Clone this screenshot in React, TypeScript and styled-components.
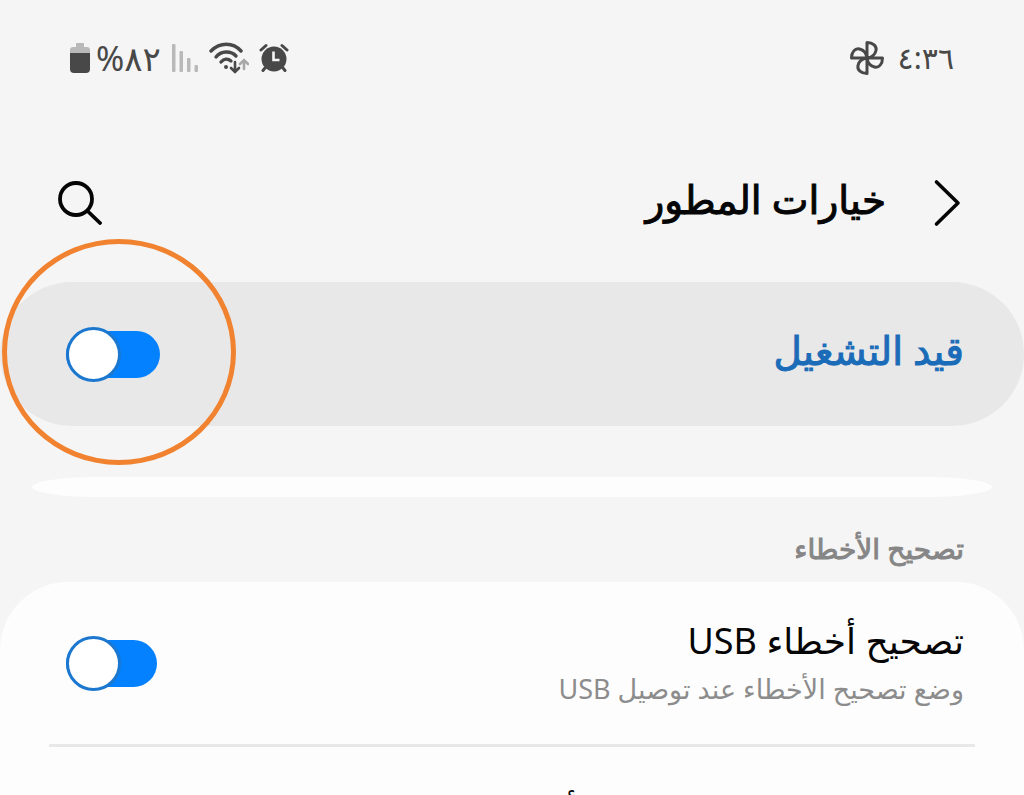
import React from 'react';
import styled, { createGlobalStyle } from 'styled-components';

const GlobalStyle = createGlobalStyle`
  *, *::before { box-sizing: border-box; }
  body {
    margin: 0;
    background: #f5f5f5;
    color: #050505;
    font-family: "Noto Sans", "DejaVu Sans", sans-serif;
  }
`;

const Screen = styled.div`
  display: flex;
  flex-direction: column;
  height: 100vh;
  overflow: hidden;
`;

const StatusBar = styled.div`
  display: flex;
  justify-content: space-between;
  align-items: center;
  flex: none;
  height: 116px;
  padding: 0 70px;
  color: #484848;
`;

const StatusGroup = styled.div<{ $gap: number }>`
  display: flex;
  align-items: center;
  gap: ${(p) => p.$gap}px;
`;

const Battery = styled.div`
  display: flex;
  align-items: center;
  gap: 6px;
`;

const StatusText = styled.span<{ $large?: boolean }>`
  font-size: ${(p) => (p.$large ? 34 : 30)}px;
  line-height: 36px;
`;

const Header = styled.header`
  display: flex;
  align-items: center;
  flex: none;
  height: 166px;
  padding: 8px 63px 0 58px;
`;

const IconButton = styled.button`
  display: flex;
  border: 0;
  padding: 0;
  background: none;
  color: #050505;
  cursor: pointer;
`;

const Title = styled.h1`
  flex: 1;
  margin: 0 47px 0 0;
  padding-bottom: 8px;
  font-size: 39px;
  line-height: 56px;
  font-weight: 400;
  -webkit-text-stroke: 1px currentColor;
`;

const MainSwitch = styled.label`
  position: relative;
  display: flex;
  align-items: center;
  justify-content: space-between;
  flex: none;
  height: 144px;
  padding: 0 60px 0 66px;
  border-radius: 72px;
  background: #e8e8e8;
`;

const MainLabel = styled.span`
  padding-bottom: 8px;
  color: #1b6cb8;
  font-size: 39px;
  line-height: 56px;
  -webkit-text-stroke: 1px currentColor;
`;

const Highlight = styled.span`
  position: absolute;
  left: 2px;
  top: -43px;
  width: 234px;
  height: 226px;
  border: 5px solid #f08230;
  border-radius: 50%;
  pointer-events: none;
`;

const Toggle = styled.input<{ $wide?: boolean }>`
  appearance: none;
  display: flex;
  align-items: center;
  justify-content: flex-end;
  flex: none;
  width: ${(p) => (p.$wide ? 94 : 91)}px;
  height: 47px;
  margin: 0;
  background: #0381fe;
  border-radius: 24px;
  cursor: pointer;

  &::before {
    content: "";
    flex: none;
    width: 55px;
    height: 55px;
    border: 3px solid #1c78cf;
    border-radius: 50%;
    background: #fff;
  }
`;

const CardEnd = styled.div`
  flex: none;
  height: 20px;
  margin: 51px 32px 0;
  border-radius: 64px / 10px;
  background: #fdfdfd;
`;

const SectionTitle = styled.h2`
  flex: none;
  margin: 0;
  padding: 31px 60px 14px;
  color: #868686;
  font-size: 28px;
  line-height: 40px;
  font-weight: 400;
  -webkit-text-stroke: 1px currentColor;
`;

const Card = styled.section`
  flex: 1 0 auto;
  border-radius: 68px 68px 0 0;
  background: #fdfdfd;
`;

const Row = styled.label`
  display: flex;
  align-items: center;
  justify-content: space-between;
  height: 162px;
  padding: 0 60px 0 66px;
`;

const RowText = styled.span`
  display: flex;
  flex-direction: column;
  gap: 2px;
  padding-top: 2px;
`;

const RowTitle = styled.span`
  font-size: 36px;
  line-height: 48px;
`;

const RowNote = styled.span`
  color: #8c8c8c;
  font-size: 27px;
  line-height: 44px;
`;

const Divider = styled.hr`
  height: 3px;
  margin: 0 49px;
  border: 0;
  background: #e8e8e8;
`;

const NextRow = styled.div`
  padding: 42px 60px;
`;

function PinwheelIcon() {
  const blade = 'M18 18V2.500C24 2.500 28 6 27 10.500C26 15 22 17.500 18 18Z';
  return (
    <svg width="36" height="36" viewBox="0 0 36 36" fill="none" stroke="currentColor" strokeWidth="3" strokeLinejoin="round">
      {[0, 90, 180, 270].map((a) => (
        <path key={a} d={blade} transform={`rotate(${a} 18 18)`} />
      ))}
    </svg>
  );
}

function AlarmIcon() {
  return (
    <svg width="30" height="30" viewBox="0 0 30 30" fill="none" strokeLinecap="round">
      <circle cx="15" cy="16" r="12.500" fill="currentColor" />
      <path d="M2 7L7 2.500M28 7L23 2.500M6 25L4 27.500M24 25L26 27.500" stroke="currentColor" strokeWidth="3" />
      <path d="M14.500 8.500V17H20.500" stroke="#f5f5f5" strokeWidth="2.600" strokeLinecap="butt" />
    </svg>
  );
}

function WifiIcon() {
  return (
    <svg width="40" height="32" viewBox="0 0 40 32" fill="none" stroke="currentColor" strokeWidth="3.400" strokeLinecap="round">
      <path d="M2 9C11 0 24 0 32 9" />
      <path d="M7 15C12 8.500 22 8.500 27 14" />
      <path d="M12 20C15 16.500 19 16.500 22 19" />
      <circle cx="17" cy="25" r="2" fill="currentColor" stroke="none" />
      <path d="M26 20V30M22 26L26 30L30 26" strokeWidth="2.600" />
      <path d="M35 27V18M31 22L35 18L39 22" stroke="#a8a8a8" strokeWidth="2.600" />
    </svg>
  );
}

function SignalIcon() {
  return (
    <svg width="28" height="30" viewBox="0 0 28 30" fill="#b9b9b9">
      <rect x="1" y="1" width="3.500" height="28" rx="1" />
      <rect x="8.500" y="8" width="3.500" height="21" rx="1" />
      <rect x="16" y="15" width="3.500" height="14" rx="1" />
      <rect x="23.500" y="22" width="3.500" height="7" rx="1" />
    </svg>
  );
}

function BatteryIcon() {
  return (
    <svg width="20" height="32" viewBox="0 0 20 32">
      <path d="M6 2Q6 1 7 1H13Q14 1 14 2V5H17Q20 5 20 8V12H0V8Q0 5 3 5H6Z" fill="#b9b9b9" />
      <path d="M0 11H20V27Q20 31 16 31H4Q0 31 0 27Z" fill="currentColor" />
    </svg>
  );
}

function BackIcon() {
  return (
    <svg width="28" height="48" viewBox="0 0 28 48" fill="none" stroke="currentColor" strokeWidth="3.600" strokeLinecap="round" strokeLinejoin="round">
      <path d="M3.500 3L25 24L3.500 45" />
    </svg>
  );
}

function SearchIcon() {
  return (
    <svg width="44" height="44" viewBox="0 0 44 44" fill="none" stroke="currentColor" strokeWidth="3.800" strokeLinecap="round">
      <circle cx="18" cy="18" r="16" />
      <path d="M29.500 30L42 42" />
    </svg>
  );
}

export default function App() {
  return (
    <Screen dir="rtl" lang="ar">
      <GlobalStyle />
      <StatusBar>
        <StatusGroup $gap={13}>
          <StatusText>٤:٣٦</StatusText>
          <PinwheelIcon />
        </StatusGroup>
        <StatusGroup $gap={10}>
          <AlarmIcon />
          <WifiIcon />
          <SignalIcon />
          <Battery>
            <StatusText $large>٨٢%</StatusText>
            <BatteryIcon />
          </Battery>
        </StatusGroup>
      </StatusBar>
      <Header>
        <IconButton type="button" aria-label="رجوع"><BackIcon /></IconButton>
        <Title>خيارات المطور</Title>
        <IconButton type="button" aria-label="بحث"><SearchIcon /></IconButton>
      </Header>
      <MainSwitch>
        <MainLabel>قيد التشغيل</MainLabel>
        <Toggle type="checkbox" role="switch" defaultChecked $wide />
        <Highlight />
      </MainSwitch>
      <CardEnd />
      <SectionTitle>تصحيح الأخطاء</SectionTitle>
      <Card>
        <Row>
          <RowText>
            <RowTitle>تصحيح أخطاء USB</RowTitle>
            <RowNote>وضع تصحيح الأخطاء عند توصيل USB</RowNote>
          </RowText>
          <Toggle type="checkbox" role="switch" defaultChecked />
        </Row>
        <Divider />
        <NextRow>
          <RowTitle>إلغاء عملية تفويض تصحيح أخطاء USB</RowTitle>
        </NextRow>
      </Card>
    </Screen>
  );
}
